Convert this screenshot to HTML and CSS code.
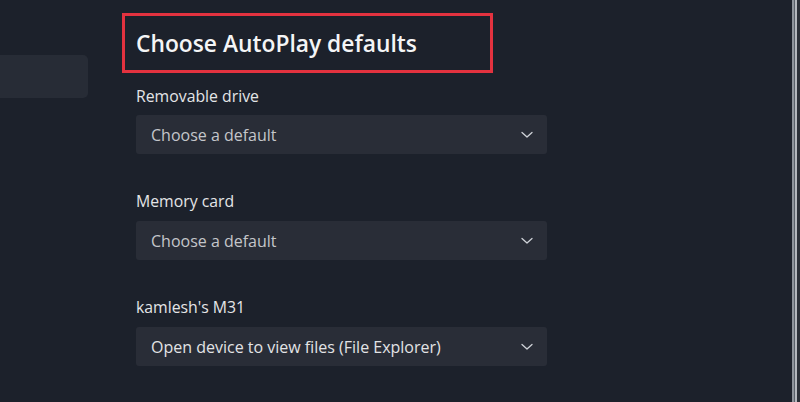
FILE: index.html
```html
<!DOCTYPE html>
<html lang="en">
<head>
<meta charset="utf-8">
<title>AutoPlay</title>
<link rel="stylesheet" href="styles.css">
</head>
<body>
<div class="window">
  <aside class="sidebar">
    <div class="nav-item"></div>
  </aside>
  <main class="content">
    <div class="heading-box">
      <h1 class="title">Choose AutoPlay defaults</h1>
    </div>
    <section class="group">
      <div class="label">Removable drive</div>
      <div class="select">
        <span class="select-text">Choose a default</span>
        <svg class="chevron" width="12" height="8" viewBox="0 0 12 8"><path d="M1 1.5 L6 6 L11 1.5" fill="none" stroke="#cfd2d8" stroke-width="1.3" stroke-linecap="round" stroke-linejoin="round"/></svg>
      </div>
    </section>
    <section class="group">
      <div class="label">Memory card</div>
      <div class="select">
        <span class="select-text">Choose a default</span>
        <svg class="chevron" width="12" height="8" viewBox="0 0 12 8"><path d="M1 1.5 L6 6 L11 1.5" fill="none" stroke="#cfd2d8" stroke-width="1.3" stroke-linecap="round" stroke-linejoin="round"/></svg>
      </div>
    </section>
    <section class="group">
      <div class="label">kamlesh's M31</div>
      <div class="select">
        <span class="select-text light">Open device to view files (File Explorer)</span>
        <svg class="chevron" width="12" height="8" viewBox="0 0 12 8"><path d="M1 1.5 L6 6 L11 1.5" fill="none" stroke="#cfd2d8" stroke-width="1.3" stroke-linecap="round" stroke-linejoin="round"/></svg>
      </div>
    </section>
  </main>
  <div class="edge">
    <span class="edge-a"></span><span class="edge-b"></span><span class="edge-c"></span><span class="edge-d"></span>
  </div>
</div>
</body>
</html>
```
FILE: styles.css
```css
* { box-sizing: border-box; }
html, body {
  margin: 0;
  padding: 0;
  height: 100%;
  background: #1c212b;
}
body {
  font-family: "Open Sans", "Noto Sans", "Liberation Sans", sans-serif;
  color: #e8e9eb;
  overflow: hidden;
}
.window {
  display: flex;
  height: 402px;
  width: 800px;
}
.sidebar {
  width: 88px;
  flex: 0 0 88px;
  padding-top: 55px;
}
.nav-item {
  height: 43px;
  background: #272c36;
  border-radius: 0 5px 5px 0;
}
.content {
  flex: 1;
  margin-left: 34px;
  padding-top: 13px;
}
.heading-box {
  width: 371px;
  height: 60px;
  border: 3px solid #e3323f;
  padding-left: 11px;
  display: flex;
  align-items: center;
}
.title {
  margin: 0;
  font-size: 22.8px;
  font-weight: 600;
  color: #f4f5f6;
  letter-spacing: 0;
}
.group {
  margin-left: 14px;
  width: 411px;
}
.label {
  font-size: 15.8px;
  line-height: 20px;
  color: #e4e5e7;
  margin-top: 13px;
  margin-bottom: 9px;
}
.group + .group .label { margin-top: 37px; margin-bottom: 10px; }
.select {
  height: 39px;
  background: #292d37;
  border-radius: 3px;
  display: flex;
  align-items: center;
  justify-content: space-between;
  padding: 0 14px 0 15px;
}
.select-text {
  font-size: 16px;
  color: #c4c6ca;
}
.select-text.light { color: #e2e3e5; }
.chevron { display: block; }
.edge {
  flex: 0 0 8px;
  display: flex;
  margin-left: auto;
}
.edge-a { width: 2px; background: #8d939b; }
.edge-b { width: 1px; background: #596069; }
.edge-c { width: 2px; background: #b3b7bd; }
.edge-d { width: 3px; background: #2b3038; }
```
